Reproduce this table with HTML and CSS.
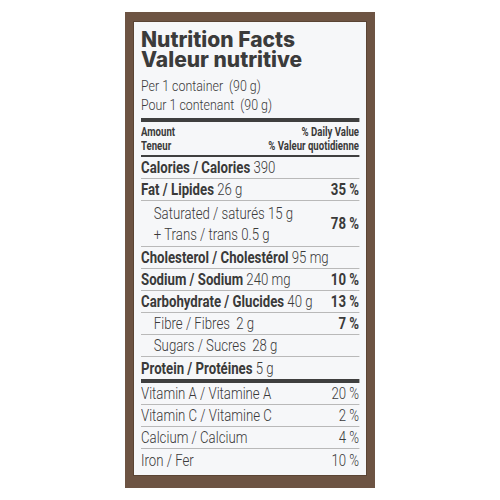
FILE: index.html
```html
<!DOCTYPE html>
<html lang="en">
<head>
  <meta charset="UTF-8">
  <title>Nutrition Facts</title>
  <link rel="stylesheet" href="styles.css">
</head>
<body>
  <div class="frame">
    <div class="label">
      <h1 class="title">Nutrition Facts<br>Valeur nutritive</h1>

      <!-- condensed block: squeezed sideways like a narrow label face -->
      <div class="cond">
        <p class="serving">Per 1 container &nbsp;(90 g)<br>Pour 1 contenant &nbsp;(90 g)</p>

        <div class="head">
          <div class="head-row"><span>Amount</span><span>% Daily Value</span></div>
          <div class="head-row"><span>Teneur</span><span>% Valeur quotidienne</span></div>
        </div>

        <div class="row"><span><b>Calories / Calories</b> 390</span></div>
        <div class="row"><span><b>Fat / Lipides</b> 26 g</span><b>35 %</b></div>
        <div class="row row-double">
          <span class="sub">Saturated / saturés 15 g<br>+ Trans / trans 0.5 g</span><b>78 %</b>
        </div>
        <div class="row"><span><b>Cholesterol / Cholestérol</b> 95 mg</span></div>
        <div class="row"><span><b>Sodium / Sodium</b> 240 mg</span><b>10 %</b></div>
        <div class="row"><span><b>Carbohydrate / Glucides</b> 40 g</span><b>13 %</b></div>
        <div class="row"><span class="sub">Fibre / Fibres &nbsp;2 g</span><b>7 %</b></div>
        <div class="row"><span class="sub">Sugars / Sucres &nbsp;28 g</span></div>
        <div class="row row-last"><span><b>Protein / Protéines</b> 5 g</span></div>

        <div class="vitamins">
          <div class="row"><span>Vitamin A / Vitamine A</span><span>20 %</span></div>
          <div class="row"><span>Vitamin C / Vitamine C</span><span>2 %</span></div>
          <div class="row"><span>Calcium / Calcium</span><span>4 %</span></div>
          <div class="row row-last"><span>Iron / Fer</span><span>10 %</span></div>
        </div>
      </div>
    </div>
  </div>
</body>
</html>
```

FILE: styles.css
```css
body {
  margin: 0;
  background: #fff;
  font-family: Roboto, "Liberation Sans", sans-serif;
  color: #3a3a3a;
}

.frame {
  width: 250px;
  margin: 12px auto 0;
  box-sizing: border-box;
  background: #6d5443;
  padding: 10px 9px 13px;
}

.label {
  background: #f6f7f9;
  padding: 8px 7px 6px;
  height: 453px;
  box-sizing: border-box;
  box-shadow: 0 0 0 1px #5a4434;
}

.title {
  margin: 0;
  font-family: Inter, sans-serif;
  font-weight: 800;
  font-size: 21px;
  line-height: 20px;
  color: #3b3b3b;
}

/* 218px of label width / 0.8 */
.cond {
  width: 272.5px;
  transform: scaleX(0.8);
  transform-origin: 0 0;
}

.serving {
  margin: 7px 0 0;
  font-size: 15.5px;
  font-weight: 300;
  line-height: 19px;
  padding-bottom: 3px;
  border-bottom: 4px solid #3f3f3f;
}

.head {
  padding: 3px 0 2px;
  border-bottom: 2px solid #3f3f3f;
  font-size: 12px;
  font-weight: bold;
}

.head-row {
  display: flex;
  justify-content: space-between;
  line-height: 14px;
}

.row {
  display: flex;
  justify-content: space-between;
  align-items: center;
  height: 22px;
  box-sizing: border-box;
  border-bottom: 1px solid #b9b9b9;
  font-size: 16.5px;
  font-weight: 300;
}

.row b {
  font-weight: 700;
}

.row-double {
  height: 46px;
  line-height: 21px;
}

.row-last {
  border-bottom: none;
}

.sub {
  padding-left: 16px;
}

.vitamins {
  border-top: 4px solid #3f3f3f;
}
```
